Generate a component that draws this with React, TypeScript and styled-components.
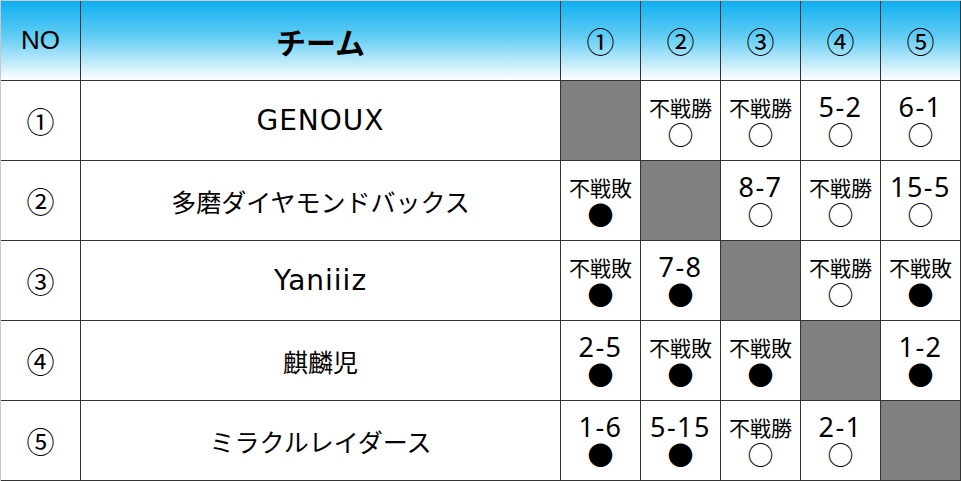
import React from "react";
import styled, { createGlobalStyle } from "styled-components";

const GlobalStyle = createGlobalStyle`
  html, body {
    margin: 0;
    padding: 0;
    background: #ffffff;
  }
  body {
    font-family: "Noto Sans CJK JP", "Noto Sans", sans-serif;
    color: #000;
  }
`;

const Board = styled.div`
  display: grid;
  grid-template-columns: 80px 480px repeat(5, 80px);
  grid-auto-rows: 80px;
  width: 961px;
  border-top: 1px solid #c8c8c8;
  border-left: 1px solid #c8c8c8;
`;

const Box = styled.div`
  display: flex;
  align-items: center;
  justify-content: center;
  border-right: 1px solid #333;
  border-bottom: 1px solid #333;
  text-align: center;
`;

const HeadCell = styled(Box)<{ $kind?: "latin" | "bold" }>`
  background: linear-gradient(to bottom, #0eaef0 0%, #62cdf4 45%, #ffffff 100%);
  font-family: ${(p) =>
    p.$kind === "latin" ? `"Liberation Sans", Arial, sans-serif` : `"Noto Sans CJK JP", sans-serif`};
  font-size: ${(p) => (p.$kind === "bold" ? 30 : p.$kind === "latin" ? 26 : 28)}px;
  font-weight: ${(p) => (p.$kind === "bold" ? 700 : 400)};
`;

const NoCell = styled(Box)`
  font-size: 28px;
`;

const TeamCell = styled(Box)`
  font-family: "DejaVu Sans", "Noto Sans CJK JP", sans-serif;
  font-size: 28px;
  letter-spacing: 1px;

  &:lang(ja) {
    font-family: "Noto Sans CJK JP", sans-serif;
    font-size: 25px;
    letter-spacing: 0;
  }
`;

const Cell = styled(Box)<{ $blank?: boolean }>`
  flex-direction: column;
  background: ${(p) => (p.$blank ? "#808080" : "#ffffff")};
`;

const Score = styled.span<{ $small?: boolean }>`
  font-family: ${(p) =>
    p.$small ? `"Noto Sans CJK JP", sans-serif` : `"Noto Sans", sans-serif`};
  font-size: ${(p) => (p.$small ? 21 : 27)}px;
  letter-spacing: ${(p) => (p.$small ? 0 : 1.5)}px;
  line-height: 28px;
  height: 28px;
  margin-top: -2px;
`;

const Mark = styled.span`
  font-size: 26px;
  line-height: 26px;
`;

type Res = { s: string; win: boolean } | null;

const teams = ["GENOUX", "多磨ダイヤモンドバックス", "Yaniiiz", "麒麟児", "ミラクルレイダース"];
const nums = ["①", "②", "③", "④", "⑤"];

const results: Res[][] = [
  [null, { s: "不戦勝", win: true }, { s: "不戦勝", win: true }, { s: "5-2", win: true }, { s: "6-1", win: true }],
  [{ s: "不戦敗", win: false }, null, { s: "8-7", win: true }, { s: "不戦勝", win: true }, { s: "15-5", win: true }],
  [{ s: "不戦敗", win: false }, { s: "7-8", win: false }, null, { s: "不戦勝", win: true }, { s: "不戦敗", win: false }],
  [{ s: "2-5", win: false }, { s: "不戦敗", win: false }, { s: "不戦敗", win: false }, null, { s: "1-2", win: false }],
  [{ s: "1-6", win: false }, { s: "5-15", win: false }, { s: "不戦勝", win: true }, { s: "2-1", win: true }, null],
];

const isLatin = (t: string) => /^[A-Za-z]+$/.test(t);

export default function App() {
  return (
    <>
      <GlobalStyle />
      <Board>
        <HeadCell $kind="latin">NO</HeadCell>
        <HeadCell $kind="bold">チーム</HeadCell>
        {nums.map((n) => (
          <HeadCell key={n}>{n}</HeadCell>
        ))}
        {teams.map((t, i) => (
          <React.Fragment key={t}>
            <NoCell>{nums[i]}</NoCell>
            <TeamCell lang={isLatin(t) ? "en" : "ja"}>{t}</TeamCell>
            {results[i].map((r, j) =>
              r ? (
                <Cell key={j}>
                  <Score $small={r.s.startsWith("不")}>{r.s}</Score>
                  <Mark>{r.win ? "○" : "●"}</Mark>
                </Cell>
              ) : (
                <Cell key={j} $blank />
              )
            )}
          </React.Fragment>
        ))}
      </Board>
    </>
  );
}
